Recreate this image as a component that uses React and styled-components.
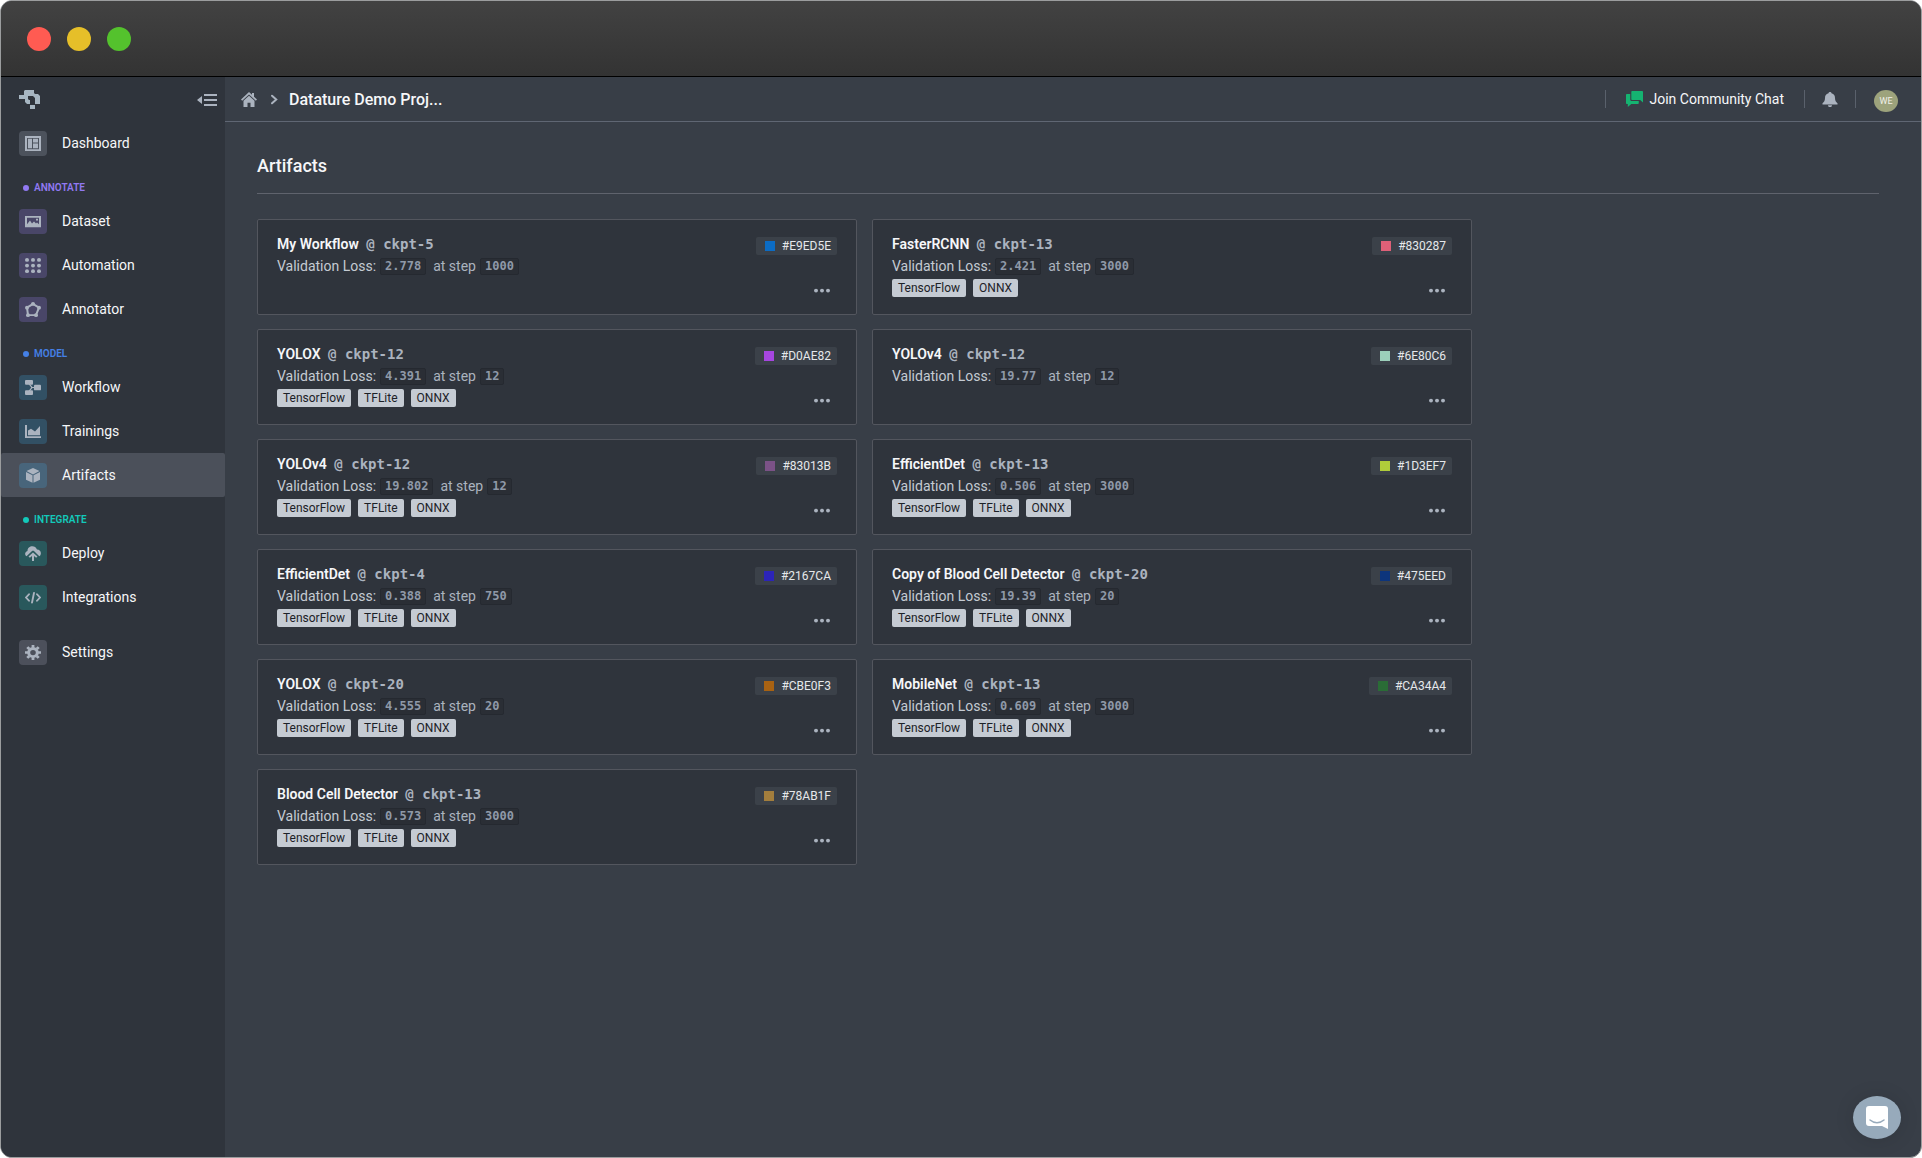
import styled, { createGlobalStyle } from "styled-components";

const GlobalStyle = createGlobalStyle`
* {
    box-sizing: border-box;
}
body {
    margin: 0;
    background-color: #fff;
    font-family: Roboto, "Liberation Sans", sans-serif;
    font-size: 14px;
    color: #f6f7f9;
}
button {
    font-family: inherit;
    padding: 0;
    border: none;
    background: none;
    cursor: pointer;
}
a {
    color: inherit;
    text-decoration: none;
}
`

const mainItems = [
    { name: "Dashboard", icon: "dashboard", color: "#4c525c" },
]

const sections = [
    {
        title: "Annotate",
        color: "#9179f2",
        items: [
            { name: "Dataset", icon: "media", color: "#494668" },
            { name: "Automation", icon: "dots", color: "#494668" },
            { name: "Annotator", icon: "polygon", color: "#494668" },
        ],
    },
    {
        title: "Model",
        color: "#4580e6",
        items: [
            { name: "Workflow", icon: "flow", color: "#325064" },
            { name: "Trainings", icon: "chart", color: "#325064" },
            { name: "Artifacts", icon: "cube", color: "#48657b", active: true },
        ],
    },
    {
        title: "Integrate",
        color: "#13c9ba",
        items: [
            { name: "Deploy", icon: "deploy", color: "#29585c" },
            { name: "Integrations", icon: "code", color: "#29585c" },
        ],
    },
]

const all = ["TensorFlow", "TFLite", "ONNX"];

const artifacts = [
    { name: "My Workflow", ckpt: "ckpt-5", loss: "2.778", step: "1000", id: "#E9ED5E", color: "#0c6cc4", formats: [] },
    { name: "FasterRCNN", ckpt: "ckpt-13", loss: "2.421", step: "3000", id: "#830287", color: "#de6078", formats: ["TensorFlow", "ONNX"] },
    { name: "YOLOX", ckpt: "ckpt-12", loss: "4.391", step: "12", id: "#D0AE82", color: "#a646e0", formats: all },
    { name: "YOLOv4", ckpt: "ckpt-12", loss: "19.77", step: "12", id: "#6E80C6", color: "#9ccfba", formats: [] },
    { name: "YOLOv4", ckpt: "ckpt-12", loss: "19.802", step: "12", id: "#83013B", color: "#7b5287", formats: all },
    { name: "EfficientDet", ckpt: "ckpt-13", loss: "0.506", step: "3000", id: "#1D3EF7", color: "#afcc3a", formats: all },
    { name: "EfficientDet", ckpt: "ckpt-4", loss: "0.388", step: "750", id: "#2167CA", color: "#2c24b8", formats: all },
    { name: "Copy of Blood Cell Detector", ckpt: "ckpt-20", loss: "19.39", step: "20", id: "#475EED", color: "#0d357c", formats: all },
    { name: "YOLOX", ckpt: "ckpt-20", loss: "4.555", step: "20", id: "#CBE0F3", color: "#a86212", formats: all },
    { name: "MobileNet", ckpt: "ckpt-13", loss: "0.609", step: "3000", id: "#CA34A4", color: "#2a6c36", formats: all },
    { name: "Blood Cell Detector", ckpt: "ckpt-13", loss: "0.573", step: "3000", id: "#78AB1F", color: "#a37e3d", formats: all },
]

const icons = {
    dashboard: <path fillRule="evenodd" d="M0 0h16v16H0zM2 2v12h12V2zM3 3h4v10H3zM8 3h5v4H8zM8 8h5v5H8z" />,
    media: <path fillRule="evenodd" d="M0 2h16v12H0zM2 4v7l3-4 2 3 2-2 2 2 1-1 2 2V4zM11 5h2v2h-2z" />,
    dots: [2, 8, 14].map(y => [2, 8, 14].map(x => <circle key={x + "-" + y} cx={x} cy={y} r="2" />)),
    polygon: (
        <>
            <path d="M2 6l6-4 6 4-3 8H3z" fill="none" stroke="currentColor" strokeWidth="2" />
            <circle cx="8" cy="2" r="2" />
            <circle cx="2" cy="6" r="2" />
            <circle cx="14" cy="6" r="2" />
            <circle cx="11" cy="14" r="2" />
            <circle cx="3" cy="14" r="2" />
        </>
    ),
    flow: (
        <>
            <rect x="0" y="0" width="8" height="5" rx="1" />
            <rect x="0" y="11" width="8" height="5" rx="1" />
            <rect x="9" y="5" width="7" height="6" rx="1" />
            <path d="M4 4l3 4-3 4M6 8h4" fill="none" stroke="currentColor" strokeWidth="1.3" />
        </>
    ),
    chart: <path d="M0 1h2v12h14v2H0zM3 12V7l3-2 4 3 5-6v10z" />,
    cube: <path d="M8 0l6.5 3.3L8 6.8 1.5 3.3zM1 4.3l6.5 3.5v8L1 12.5zM15 4.3v8.2l-6.5 3.3v-8z" />,
    deploy: (
        <>
            <path d="M1.500 11C-.6 9.500-.3 6 2.500 5.200 2.500-.8 10.500-1.500 12 3.800c4 0 5.200 5 2.300 7.200L9.200 5.600c-.7-.7-1.700-.7-2.400 0z" />
            <path d="M8 6.800l4.500 4.300-1.400 1.500L9 10.600V16H7v-5.400l-2.100 2-1.400-1.500z" />
        </>
    ),
    code: <path d="M4 4.500L1 8l3 3.500M12 4.500L15 8l-3 3.500M9 3L7 13.500" fill="none" stroke="currentColor" strokeWidth="1.900" strokeLinecap="round" />,
    cog: (
        <>
            <circle cx="8" cy="8" r="4.300" fill="none" stroke="currentColor" strokeWidth="3" />
            <path d="M8 0v3M8 13v3M0 8h3M13 8h3M2.300 2.300l2 2M11.700 11.700l2 2M2.300 13.700l2-2M11.700 4.300l2-2" stroke="currentColor" strokeWidth="2.800" />
        </>
    ),
    home: <path d="M8 0l3 3V1h2v4l3 3-1.200 1.200L8 2.600 1.200 9.200 0 8zM8 4l5.500 5.300V16H9.500v-4.500h-3V16H2.500V9.300z" />,
    chevron: <path d="M7 4l4.300 4L7 12" fill="none" stroke="currentColor" strokeWidth="2" strokeLinecap="round" />,
    bell: <path d="M8 0c1 0 1.500.6 1.500 1.400C12 2 13 4 13 6.500c0 3 1 4.500 2.500 5.500v1.200H.5V12C2 11 3 9.500 3 6.500 3 4 4 2 6.500 1.400 6.500.6 7 0 8 0zM6 14h4c0 1.300-.8 2-2 2s-2-.7-2-2z" />,
    chat: <path d="M6 0h9c.6 0 1 .4 1 1v10.500L13.300 9H6c-.6 0-1-.4-1-1V1c0-.6.4-1 1-1zM1 3h3v5.500C4 9.600 4.800 10 5.600 10H12v2c0 .6-.4 1-1 1H5l-3.300 3v-3H1c-.6 0-1-.4-1-1V4c0-.6.4-1 1-1z" />,
    more: [2, 8, 14].map(x => <circle key={x} cx={x} cy="8" r="2" />),
}

function Icon({ name, size = 16 }) {
    return (
        <svg width={size} height={size - 1} viewBox="0 0 16 16" preserveAspectRatio="none" fill="currentColor" aria-hidden="true">
            {icons[name]}
        </svg>
    )
}

function NavItem({ item }) {
    return (
        <NavLink href="#" $active={item.active}>
            <IconBox $color={item.color}><Icon name={item.icon} /></IconBox>
            {item.name}
        </NavLink>
    )
}

function Artifact({ item }) {
    return (
        <Card>
            <CardInfo>
                <CardTitle>{item.name} <Checkpoint>@ {item.ckpt}</Checkpoint></CardTitle>
                <Metrics>
                    <span>Validation Loss:</span>
                    <Code>{item.loss}</Code>
                    <Step>at step</Step>
                    <Code>{item.step}</Code>
                </Metrics>
                <Formats>
                    {item.formats.map(format => <Format key={format}>{format}</Format>)}
                </Formats>
            </CardInfo>
            <CardSide>
                <ColorTag><Swatch $color={item.color} />{item.id}</ColorTag>
                <MoreButton aria-label="More"><Icon name="more" /></MoreButton>
            </CardSide>
        </Card>
    )
}

export default function App() {
    return (
        <>
            <GlobalStyle />
            <Window>
                <TitleBar>
                    <Light $color="#ff5b52" />
                    <Light $color="#e6bf29" />
                    <Light $color="#54c22d" />
                </TitleBar>
                <Body>
                    <Sidebar>
                        <SidebarTop>
                            <svg width="21" height="19" viewBox="0 0 21 19" fill="#a7b6c2" aria-hidden="true">
                                <path d="M6 0h9v3l1 1h3l2 2v8h-5V8l-2-2H9v3l1 1h1v4H8l-2-2V9H0V5h5V1z" />
                                <path d="M11 15h5v4h-5z" />
                            </svg>
                            <CollapseButton aria-label="Collapse menu">
                                <svg width="20" height="12" viewBox="0 0 20 12" fill="currentColor" aria-hidden="true">
                                    <path d="M5 2v8L0 6zM7 0h13v2H7zM7 5h13v2H7zM7 10h13v2H7z" />
                                </svg>
                            </CollapseButton>
                        </SidebarTop>
                        <nav>
                            {mainItems.map(item => <NavItem key={item.name} item={item} />)}
                            {sections.map(section => (
                                <div key={section.title}>
                                    <SectionTitle $color={section.color}>{section.title}</SectionTitle>
                                    {section.items.map(item => <NavItem key={item.name} item={item} />)}
                                </div>
                            ))}
                            <Spacer />
                            <NavItem item={{ name: "Settings", icon: "cog", color: "#4c505b" }} />
                        </nav>
                    </Sidebar>
                    <Main>
                        <Header>
                            <Breadcrumbs aria-label="Breadcrumb">
                                <HomeLink href="#" aria-label="Home"><Icon name="home" /></HomeLink>
                                <Icon name="chevron" />
                                <Project href="#">Datature Demo Proj...</Project>
                            </Breadcrumbs>
                            <Actions>
                                <Divider />
                                <ChatLink href="#"><Icon name="chat" size={17} /><span>Join Community Chat</span></ChatLink>
                                <Divider />
                                <BellButton aria-label="Notifications"><Icon name="bell" /></BellButton>
                                <Divider />
                                <Avatar>WE</Avatar>
                            </Actions>
                        </Header>
                        <Content>
                            <PageTitle>Artifacts</PageTitle>
                            <Grid>
                                {artifacts.map(item => <Artifact key={item.id} item={item} />)}
                            </Grid>
                        </Content>
                    </Main>
                </Body>
                <Messenger aria-label="Open messenger">
                    <svg width="22" height="23" viewBox="0 0 22 23" aria-hidden="true">
                        <path d="M3 0h16c2 0 3 1 3 3v20l-6-3H3c-2 0-3-1-3-3V3c0-2 1-3 3-3z" fill="#fff" />
                        <path d="M4 14c4 3.500 10 3.500 14 0" fill="none" stroke="#97aabb" strokeWidth="1.500" strokeLinecap="round" />
                    </svg>
                </Messenger>
            </Window>
        </>
    )
}


const Window = styled.div`
min-height: 100vh;
display: flex;
flex-direction: column;
border: 1px solid #9b9d9e;
border-radius: 12px;
overflow: hidden;
background-color: #383e47;
`
const TitleBar = styled.div`
height: 76px;
display: flex;
align-items: center;
gap: 16px;
padding-left: 26px;
background: linear-gradient(#424242, #333);
border-bottom: 1px solid #000;
`
const Light = styled.span`
width: 24px;
height: 24px;
border-radius: 50%;
background-color: ${props => props.$color};
`
const Body = styled.div`
flex: 1;
display: flex;
`
const Sidebar = styled.aside`
width: 224px;
flex-shrink: 0;
background-color: #2f343c;
`
const SidebarTop = styled.div`
height: 44px;
display: flex;
align-items: center;
justify-content: space-between;
padding: 1px 8px 0 18px;
`
const CollapseButton = styled.button`
display: flex;
color: #abb3bf;
`
const NavLink = styled.a`
height: 44px;
display: flex;
align-items: center;
gap: 15px;
padding-left: 18px;
border-radius: 2px;
background-color: ${props => props.$active ? "#4b505a" : "transparent"};
`
const IconBox = styled.span`
width: 28px;
height: 25px;
display: flex;
align-items: center;
justify-content: center;
border-radius: 4px;
background-color: ${props => props.$color};
color: #abb3bf;
`
const SectionTitle = styled.div`
height: 34px;
display: flex;
align-items: center;
gap: 5px;
padding: 11px 0 0 22px;
font-size: 10px;
font-weight: 600;
text-transform: uppercase;
color: ${props => props.$color};
&::before{
    content: "";
    width: 6px;
    height: 6px;
    border-radius: 50%;
    background-color: currentColor;
}
`
const Spacer = styled.div`
height: 11px;
`
const Main = styled.main`
flex: 1;
min-width: 0;
`
const Header = styled.header`
height: 45px;
display: flex;
align-items: center;
justify-content: space-between;
padding: 0 23px 0 16px;
border-bottom: 1px solid #5f6673;
`
const Breadcrumbs = styled.nav`
display: flex;
align-items: center;
gap: 8px;
color: #abb3bf;
`
const HomeLink = styled.a`
display: flex;
`
const Project = styled.a`
font-size: 16px;
font-weight: 500;
color: #f6f7f9;
`
const Actions = styled.div`
display: flex;
align-items: center;
`
const Divider = styled.span`
width: 1px;
height: 18px;
background-color: #5a616c;
`
const ChatLink = styled.a`
display: flex;
align-items: center;
gap: 6px;
padding: 0 20px;
color: #15b371;
span{
    color: #f6f7f9;
}
`
const BellButton = styled.button`
display: flex;
padding: 0 17px;
color: #abb3bf;
`
const Avatar = styled.span`
width: 24px;
height: 22px;
margin: 3px 0 0 18px;
display: flex;
align-items: center;
justify-content: center;
border-radius: 50%;
background-color: #9da37c;
font-size: 9px;
color: #f0f0e8;
`
const Content = styled.section`
padding: 31px 42px 32px 32px;
`
const PageTitle = styled.h1`
height: 41px;
margin: 0 0 25px;
border-bottom: 1px solid #5f636d;
font-size: 18px;
line-height: 26px;
font-weight: 500;
`
const Grid = styled.div`
display: grid;
grid-template-columns: repeat(auto-fill, minmax(500px, 600px));
gap: 14px 15px;
max-width: 1220px;
`
const Card = styled.article`
min-height: 96px;
display: flex;
justify-content: space-between;
padding: 14px 19px 16px;
border: 1px solid #53565e;
border-radius: 2px;
background-color: #2f343c;
`
const CardInfo = styled.div`
display: flex;
flex-direction: column;
`
const CardTitle = styled.h2`
margin: 0;
font-size: 14px;
line-height: 20px;
font-weight: 600;
`
const Checkpoint = styled.span`
margin-left: 4px;
font-family: "DejaVu Sans Mono", monospace;
font-size: 14px;
color: #abb3bf;
`
const Metrics = styled.div`
height: 24px;
display: flex;
align-items: center;
color: #c5cbd3;
`
const Code = styled.code`
height: 17px;
margin-left: 4px;
padding: 0 4px;
border-radius: 2px;
border: 1px solid #252930;
background-color: #2a2e35;
font-family: "DejaVu Sans Mono", monospace;
font-size: 12px;
line-height: 15px;
font-weight: 700;
color: #8f99a8;
`
const Step = styled.span`
margin-left: 7px;
color: #abb3bf;
`
const Formats = styled.div`
display: flex;
gap: 7px;
margin-top: 1px;
`
const Format = styled.span`
height: 18px;
padding: 0 6px;
border-radius: 2px;
background-color: #c5cbd3;
font-size: 12px;
line-height: 18px;
color: #1c2127;
`
const CardSide = styled.div`
display: flex;
flex-direction: column;
align-items: flex-end;
justify-content: space-between;
`
const ColorTag = styled.span`
height: 18px;
display: flex;
align-items: center;
gap: 7px;
margin-top: 3px;
padding: 0 6px 0 9px;
border-radius: 2px;
background-color: #3b4149;
font-size: 12px;
color: #e5e8eb;
`
const Swatch = styled.span`
width: 10px;
height: 10px;
background-color: ${props => props.$color};
`
const MoreButton = styled.button`
display: flex;
padding: 0 7px;
color: #abb3bf;
`
const Messenger = styled.button`
position: fixed;
right: 21px;
bottom: 19px;
width: 48px;
height: 43px;
display: flex;
align-items: center;
justify-content: center;
border-radius: 50%;
background-color: #97aabb;
box-shadow: 0 1px 20px rgba(0, 0, 0, 0.12);
`
